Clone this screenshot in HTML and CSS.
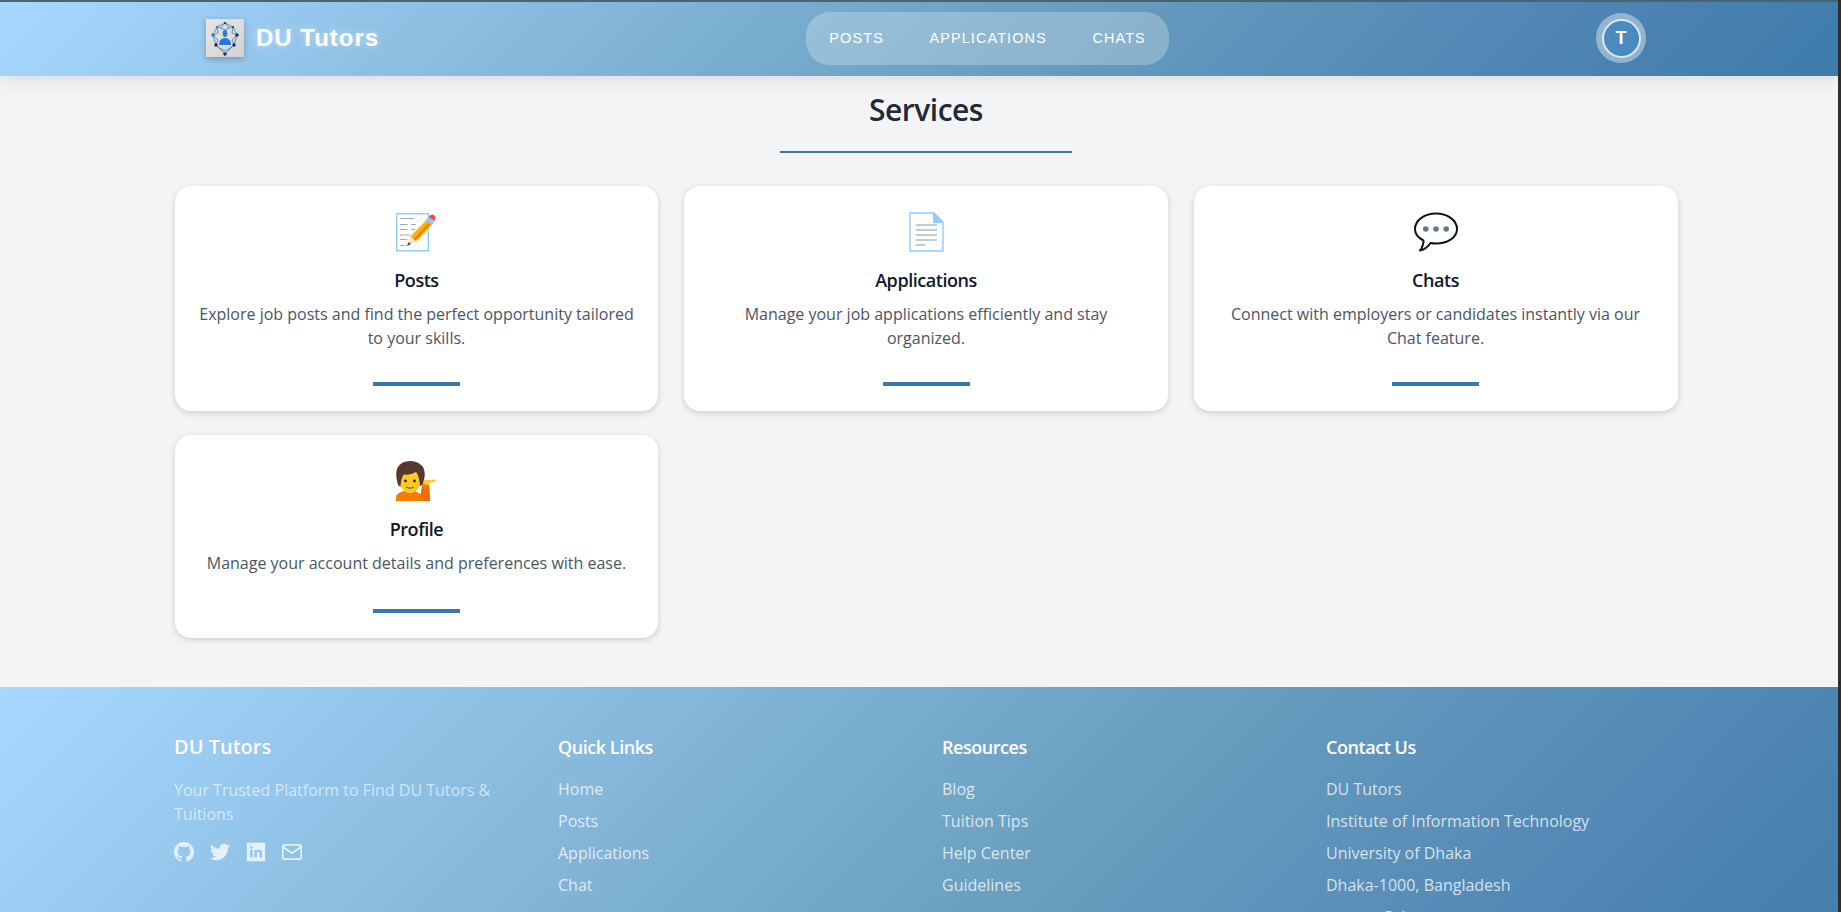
FILE: index.html
```html
<!DOCTYPE html>
<html lang="en">
<head>
  <meta charset="UTF-8">
  <meta name="viewport" content="width=device-width, initial-scale=1.0">
  <title>DU Tutors</title>
  <link rel="stylesheet" href="styles.css">
</head>
<body>
  <div class="page">

    <header class="topbar">
      <div class="topbar-inner">
        <a class="brand" href="#">
          <span class="brand-logo">
            <svg viewBox="0 0 38 38" width="38" height="38">
              <g fill="none" stroke="#3f7fb5" stroke-width="0.8">
                <path d="M19 4L27 8L31 16L28 26L19 35L10 26L7 16L11 8Z"/>
                <path d="M19 4L15 9L19 11L23 9L19 4M11 8L15 9M27 8L23 9M7 16L12 14L11 8M31 16L26 14L27 8M7 16L12 21L10 26M31 16L26 21L28 26M12 28L19 32L26 28"/>
              </g>
              <g fill="#16304a">
                <circle cx="19" cy="4" r="1.1"/>
                <circle cx="31" cy="16" r="1.7"/>
                <circle cx="28" cy="26" r="1.7"/>
                <circle cx="19" cy="35" r="1.7"/>
                <circle cx="10" cy="26" r="1.7"/>
                <circle cx="27" cy="8" r="1"/>
              </g>
              <g fill="#2a7bd0">
                <circle cx="7" cy="16" r="1.7"/>
                <circle cx="11" cy="8" r="1.1"/>
                <ellipse cx="19" cy="14.5" rx="2.3" ry="3.4"/>
                <path d="M13 26C13 21 16 19 19 19C22 19 25 21 25 26Z"/>
              </g>
            </svg>
          </span>
          <span class="brand-name">DU Tutors</span>
        </a>
        <nav class="nav-pill">
          <a href="#">Posts</a>
          <a href="#">Applications</a>
          <a href="#">Chats</a>
        </nav>
        <div class="avatar-ring">
          <div class="avatar">T</div>
        </div>
      </div>
    </header>

    <main class="services">
      <h2 class="services-title">Services</h2>
      <div class="services-rule"></div>

      <div class="card-grid">
        <div class="card">
          <svg class="card-icon" viewBox="0 0 40 40">
            <rect x="0.7" y="1.7" width="31.6" height="37" fill="#fff" stroke="#90caf9" stroke-width="1.4"/>
            <g fill="none" stroke="#90a4ae" stroke-width="0.9">
              <path d="M4 6.5H18M4 12.5H12M15 12.5H20M4 17.5H11M15 17.5H19M4 23H17M4 27.5H12M4 33.5H13"/>
            </g>
            <path d="M7 36L11 26L32 4L39 10L18 32Z" fill="#e3f2fd" opacity="0.7"/>
            <path d="M14.5 24.5L31 7.5L36.5 12.5L20 29.5Z" fill="#ffb300"/>
            <path d="M17.5 27L33.5 10L35 11.5L19.5 28.5Z" fill="#f57c00"/>
            <path d="M14.5 24.5L20 29.5L12.5 32.5Z" fill="#ffe0b2"/>
            <path d="M12.8 30L15 32L11 34Z" fill="#424242"/>
            <path d="M29.5 8L33 4.5L38.5 9.5L35.5 13.2Z" fill="#90caf9"/>
            <path d="M32.5 5C34 2.5 36 1.7 38 3C40 4.5 40 6.5 38.5 9Z" fill="#ef5350"/>
          </svg>
          <h3 class="card-title">Posts</h3>
          <p class="card-text">Explore job posts and find the perfect opportunity tailored to your skills.</p>
          <div class="card-bar"></div>
        </div>

        <div class="card">
          <svg class="card-icon" viewBox="0 0 40 40">
            <path d="M4 1H28L37 10V39H4Z" fill="#fff" stroke="#90caf9" stroke-width="1.4"/>
            <path d="M28 1L37 10V11H27V1Z" fill="#90caf9"/>
            <g stroke="#b0bec5" stroke-width="1.3">
              <path d="M9.5 13H31M9.500 18H31M9.500 23H31M9.500 28H31M9.500 33H19"/>
            </g>
          </svg>
          <h3 class="card-title">Applications</h3>
          <p class="card-text">Manage your job applications efficiently and stay organized.</p>
          <div class="card-bar"></div>
        </div>

        <div class="card">
          <svg class="card-icon" viewBox="0 0 44 40">
            <path d="M22 1.500C33 1.500 43 8 43 17C43 26 33 31.500 22 31.500C20 31.500 18 31.300 16.500 31C14.500 34 11 37.500 6 38.500C8 36 9.500 33 9.500 28.500C4.500 26 1 22 1 17C1 8 11 1.500 22 1.500Z" fill="#fff" stroke="#111" stroke-width="2" stroke-linejoin="round"/>
            <g fill="#607d8b">
              <circle cx="11.800" cy="17" r="2.800"/>
              <circle cx="22" cy="17" r="2.800"/>
              <circle cx="32.200" cy="17" r="2.800"/>
            </g>
          </svg>
          <h3 class="card-title">Chats</h3>
          <p class="card-text">Connect with employers or candidates instantly via our Chat feature.</p>
          <div class="card-bar"></div>
        </div>

        <div class="card">
          <svg class="card-icon" viewBox="0 0 40 40">
            <path d="M0 40V37C0 33 4 31 8 30L18 30C21 31 23 32 25 33L26 22H33L34 40Z" fill="#f57c00"/>
            <path d="M25 33L26 26L33 26L34 40H24Z" fill="#ef6c00"/>
            <path d="M26 23L28 19L34 19L40 18.500L39.500 20.500L35 21L33 24Z" fill="#ffca28"/>
            <ellipse cx="14" cy="20" rx="10.500" ry="12" fill="#ffca28"/>
            <path d="M14 0C7 0 1.500 4 0.500 10C-0.500 15 1 19 1.500 22C1.800 24 3 25.500 4.500 25.500C5 21 5.500 16 8 13.500C12 14 17 13 20 11C22 13 23.500 18 24 25C26 24.500 27 23 27.500 20C29.500 15 29 10 27 6C24 2 19 0 14 0Z" fill="#543930"/>
            <circle cx="9.500" cy="20" r="1.400" fill="#3e2723"/>
            <circle cx="18.500" cy="20" r="1.400" fill="#3e2723"/>
            <path d="M10 26C12 27.500 16 27.500 18 26" fill="none" stroke="#5d4037" stroke-width="1"/>
          </svg>
          <h3 class="card-title">Profile</h3>
          <p class="card-text card-text-short">Manage your account details and preferences with ease.</p>
          <div class="card-bar"></div>
        </div>
      </div>
    </main>

    <footer class="footer">
      <div class="footer-grid">
        <div class="footer-col">
          <h4 class="footer-heading footer-brand">DU Tutors</h4>
          <p class="footer-tagline">Your Trusted Platform to Find DU Tutors &amp; Tuitions</p>
          <div class="socials">
            <svg class="social" viewBox="0 0 16 16" fill="currentColor">
              <path d="M8 0C3.58 0 0 3.58 0 8c0 3.54 2.29 6.53 5.47 7.59.4.07.55-.17.55-.38 0-.19-.01-.82-.01-1.49-2.01.37-2.53-.49-2.69-.94-.09-.23-.48-.94-.82-1.13-.28-.15-.68-.52-.01-.53.63-.01 1.08.58 1.23.82.72 1.21 1.87.87 2.33.66.07-.52.28-.87.51-1.07-1.78-.2-3.64-.89-3.64-3.95 0-.87.31-1.59.82-2.15-.08-.2-.36-1.02.08-2.12 0 0 .67-.21 2.2.82.64-.18 1.32-.27 2-.27s1.36.09 2 .27c1.53-1.04 2.2-.82 2.2-.82.44 1.1.16 1.92.08 2.12.51.56.82 1.27.82 2.15 0 3.07-1.87 3.75-3.65 3.95.29.25.54.73.54 1.48 0 1.07-.01 1.93-.01 2.2 0 .21.15.46.55.38A8.01 8.01 0 0016 8c0-4.42-3.58-8-8-8z"/>
            </svg>
            <svg class="social" viewBox="0 0 24 24" fill="currentColor">
              <path d="M24 4.56c-.88.39-1.83.65-2.83.77 1.02-.61 1.8-1.58 2.17-2.72-.95.56-2.01.97-3.13 1.19A4.92 4.92 0 0016.62 2.2c-3.18 0-5.51 2.96-4.8 6.04C7.73 8.04 4.1 6.08 1.67 3.1.38 5.31 1 8.2 3.19 9.67c-.8-.03-1.56-.25-2.23-.62-.05 2.28 1.58 4.41 3.95 4.89-.69.19-1.45.23-2.22.08.63 1.96 2.45 3.38 4.6 3.42A9.9 9.9 0 010 19.54a13.94 13.94 0 007.55 2.21c9.14 0 14.31-7.72 14-14.65.96-.69 1.8-1.56 2.45-2.54z"/>
            </svg>
            <svg class="social" viewBox="0 0 24 24" fill="currentColor">
              <path fill-rule="evenodd" d="M1 1h22v22h-22zM5 9.500v9h3v-9zM6.500 5A1.700 1.700 0 106.500 8.400 1.700 1.700 0 006.500 5zM10 9.500v9h3v-5c0-1.200.7-1.900 1.700-1.900s1.500.7 1.500 1.900v5h3v-5.600c0-2.600-1.400-3.700-3.200-3.700-1.400 0-2.400.7-3 1.600V9.500z"/>
            </svg>
            <svg class="social" viewBox="0 0 24 24" fill="none" stroke="currentColor" stroke-width="2" stroke-linejoin="round">
              <rect x="1" y="3.500" width="22" height="17" rx="2"/>
              <path d="M1.500 6L12 13.500L22.500 6"/>
            </svg>
          </div>
        </div>

        <div class="footer-col">
          <h4 class="footer-heading">Quick Links</h4>
          <ul class="footer-list">
            <li>Home</li>
            <li>Posts</li>
            <li>Applications</li>
            <li>Chat</li>
          </ul>
        </div>

        <div class="footer-col">
          <h4 class="footer-heading">Resources</h4>
          <ul class="footer-list">
            <li>Blog</li>
            <li>Tuition Tips</li>
            <li>Help Center</li>
            <li>Guidelines</li>
          </ul>
        </div>

        <div class="footer-col">
          <h4 class="footer-heading">Contact Us</h4>
          <ul class="footer-list">
            <li>DU Tutors</li>
            <li>Institute of Information Technology</li>
            <li>University of Dhaka</li>
            <li>Dhaka-1000, Bangladesh</li>
            <li>contact@dututors.com</li>
          </ul>
        </div>
      </div>
    </footer>

  </div>
</body>
</html>
```

FILE: styles.css
```css
html,
body {
  margin: 0;
  padding: 0;
  height: 912px;
  overflow: hidden;
  background-color: #2e2e2e;
}

.page {
  width: 1838px;
  height: 912px;
  overflow: hidden;
  background-color: #f3f4f6;
  font-family: "Open Sans", "Noto Sans", sans-serif;
}

/* header */
.topbar {
  height: 74px;
  border-top: 2px solid #4b6373;
  background: linear-gradient(135deg, #a8d8ff, #6a9fc0 55%, #4f86b4 82%, #3e7bab);
  box-shadow: 0 4px 16px rgba(0, 0, 0, 0.1);
  position: relative;
}

.topbar-inner {
  width: 1440px;
  height: 72px;
  margin-left: 206px;
  display: flex;
  align-items: center;
  justify-content: space-between;
}

.brand {
  display: flex;
  align-items: center;
  gap: 12px;
  color: #fff;
  text-decoration: none;
}

.brand-logo {
  width: 38px;
  height: 38px;
  background: linear-gradient(135deg, #e6e6e6, #d2d2d2);
  box-shadow: 0 2px 6px rgba(0, 0, 0, 0.25);
  display: flex;
  align-items: center;
  justify-content: center;
  overflow: hidden;
}

.brand-name {
  font-family: "Liberation Sans", Arial, sans-serif;
  font-size: 24px;
  font-weight: 700;
  letter-spacing: 1px;
  text-shadow: 0 0 6px rgba(255, 255, 255, 0.4);
}

.nav-pill {
  height: 53px;
  padding: 0 23px;
  display: flex;
  align-items: center;
  gap: 45.5px;
  border-radius: 24px;
  background-color: rgba(255, 255, 255, 0.25);
}

.nav-pill a {
  font-family: "Liberation Sans", Arial, sans-serif;
  font-size: 14.4px;
  letter-spacing: 1.15px;
  text-transform: uppercase;
  color: #fff;
  text-decoration: none;
}

.avatar-ring {
  width: 50px;
  height: 50px;
  border-radius: 50%;
  background-color: rgba(255, 255, 255, 0.4);
  display: flex;
  align-items: center;
  justify-content: center;
}

.avatar {
  width: 35px;
  height: 35px;
  border: 2px solid rgba(255, 255, 255, 0.8);
  border-radius: 50%;
  background-color: #4a8abf;
  color: #fff;
  font-family: "Liberation Sans", Arial, sans-serif;
  font-size: 18px;
  font-weight: 700;
  display: flex;
  align-items: center;
  justify-content: center;
}

/* services */
.services {
  width: 1503px;
  height: 611px;
  margin-left: 174.5px;
  display: flex;
  flex-direction: column;
  align-items: center;
}

.services-title {
  margin: 14px 0 0;
  font-size: 30px;
  line-height: 40px;
  font-weight: 600;
  letter-spacing: -0.5px;
  color: #1f2937;
}

.services-rule {
  width: 292px;
  height: 2px;
  margin-top: 21px;
  background-color: #3b78a8;
}

.card-grid {
  width: 100%;
  margin-top: 33px;
  display: grid;
  grid-template-columns: repeat(3, 1fr);
  gap: 24px 25.6px;
}

.card {
  padding: 26px 24px 25px;
  border-radius: 16px;
  background-color: #fff;
  box-shadow: 0 2px 6px rgba(0, 0, 0, 0.16);
  display: flex;
  flex-direction: column;
  align-items: center;
  text-align: center;
}

.card-icon {
  width: 44px;
  height: 40px;
}

.card-title {
  margin: 14px 0 0;
  font-size: 18px;
  line-height: 28px;
  font-weight: 600;
  letter-spacing: -0.45px;
  color: #111827;
}

.card-text {
  margin: 8px 0 0;
  font-size: 16px;
  line-height: 24px;
  color: #4b5563;
}

.card-text-short {
  padding-bottom: 1.5px;
}

.card-bar {
  width: 87px;
  height: 4px;
  margin-top: 32px;
  background-color: #3b78a8;
}

/* footer */
.footer {
  height: 360px;
  background: linear-gradient(135deg, #a8d8ff, #6a9fc0 55%, #4f86b4 82%, #3e7bab);
  color: #fff;
}

.footer-grid {
  width: 1504px;
  margin-left: 174px;
  padding-top: 46px;
  display: grid;
  grid-template-columns: repeat(4, 1fr);
  gap: 32px;
}

.footer-heading {
  margin: 0;
  font-size: 18px;
  line-height: 28px;
  font-weight: 600;
  letter-spacing: -0.45px;
}

.footer-brand {
  font-size: 20px;
  letter-spacing: 0;
}

.footer-tagline {
  margin: 17px 0 0;
  max-width: 340px;
  font-size: 16px;
  line-height: 24px;
  color: rgba(255, 255, 255, 0.6);
}

.socials {
  margin-top: 16px;
  display: flex;
  align-items: center;
  gap: 16px;
  color: rgba(255, 255, 255, 0.75);
}

.social {
  width: 20px;
  height: 20px;
}

.footer-list {
  margin: 16px 0 0;
  padding: 0;
  list-style: none;
  font-size: 16px;
  line-height: 24px;
  color: rgba(255, 255, 255, 0.75);
}

.footer-list li {
  margin-bottom: 8px;
}
```
